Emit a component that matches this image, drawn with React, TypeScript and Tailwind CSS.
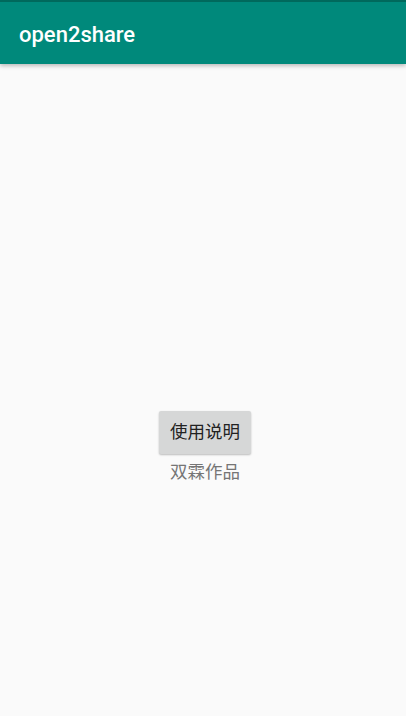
import React from "react";

export default function App() {
  return (
    <div
      className="w-[406px] h-[716px] bg-[#fafafa] flex flex-col overflow-hidden"
      style={{ fontFamily: 'Roboto, "Noto Sans CJK SC", sans-serif' }}
    >
      <div className="h-[64px] shrink-0 bg-[#00897b] border-t-2 border-[#00695c] flex items-center pl-[19px] pt-[3px] shadow-[0_2px_4px_rgba(0,0,0,0.25)] relative z-10">
        <span className="text-white text-[22px] font-medium leading-none">open2share</span>
      </div>
      <div className="flex-1 flex flex-col items-center pt-[347px] pl-[4px]">
        <button className="w-[92px] h-[43px] bg-[#d6d7d7] rounded-[2px] shadow-[0_1px_2px_rgba(0,0,0,0.25)] text-[#222222] text-[17.5px] flex items-center justify-center">
          使用说明
        </button>
        <div className="mt-[6px] text-[#757575] text-[17.5px] leading-[24px]">双霖作品</div>
      </div>
    </div>
  );
}
